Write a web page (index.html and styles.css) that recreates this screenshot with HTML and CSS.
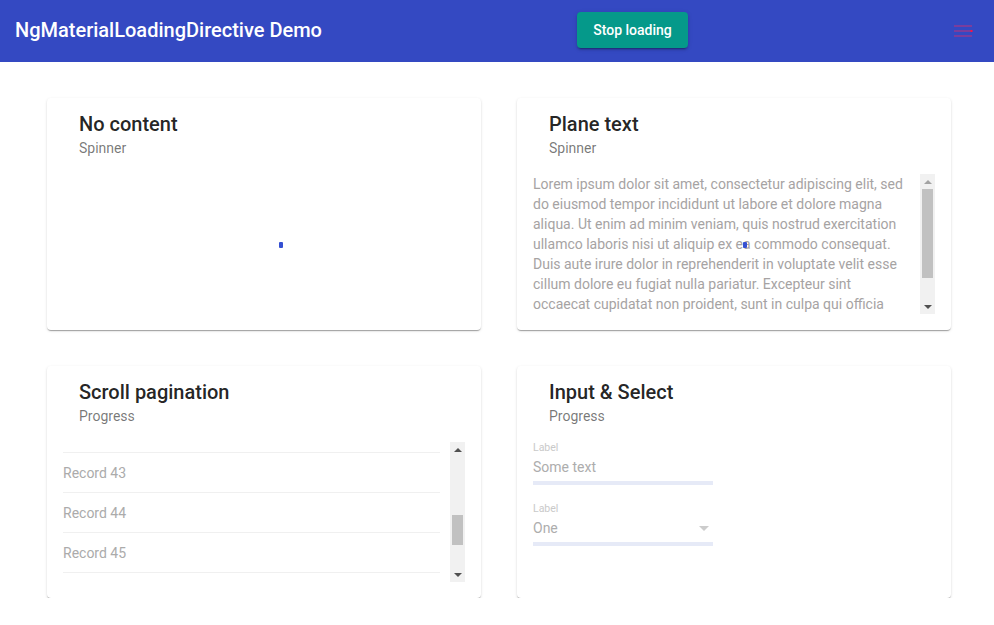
FILE: index.html
```html
<!DOCTYPE html>
<html lang="en">
<head>
<meta charset="utf-8">
<title>NgMaterialLoadingDirective Demo</title>
<link rel="stylesheet" href="styles.css">
</head>
<body>
<header class="toolbar">
  <span class="app-title">NgMaterialLoadingDirective Demo</span>
  <span class="spacer"></span>
  <button class="stop-btn" type="button">Stop loading</button>
  <span class="spacer"></span>
  <span class="menu-btn">
    <svg class="menu-icon" width="24" height="24" viewBox="0 0 24 24">
      <rect x="3" y="6" width="18" height="2" fill="rgba(255,40,90,0.35)"/>
      <rect x="3" y="11" width="18" height="2" fill="rgba(255,40,90,0.35)"/>
      <rect x="3" y="16" width="18" height="2" fill="rgba(255,40,90,0.35)"/>
      <rect x="19.5" y="11" width="2" height="2" fill="#ff1040"/>
    </svg>
  </span>
</header>

<main class="grid">
  <section class="card">
    <div class="card-header">
      <h2 class="card-title">No content</h2>
      <div class="card-subtitle">Spinner</div>
    </div>
    <div class="card-content">
      <span class="spinner spinner-one"></span>
    </div>
  </section>

  <section class="card">
    <div class="card-header">
      <h2 class="card-title">Plane text</h2>
      <div class="card-subtitle">Spinner</div>
    </div>
    <div class="card-content">
      <div class="scroll-box">
        <div class="scroll-view scroll-text">
          <p>Lorem ipsum dolor sit amet, consectetur adipiscing elit, sed do eiusmod tempor incididunt ut labore et dolore magna aliqua. Ut enim ad minim veniam, quis nostrud exercitation ullamco laboris nisi ut aliquip ex ea commodo consequat. Duis aute irure dolor in reprehenderit in voluptate velit esse cillum dolore eu fugiat nulla pariatur. Excepteur sint<br>occaecat cupidatat non proident, sunt in culpa qui officia deserunt mollit anim id est laborum.</p>
        </div>
        <div class="scrollbar">
          <span class="sb-btn"><span class="arrow-up arrow-disabled"></span></span>
          <div class="sb-track">
            <div class="sb-thumb" style="margin-top:0;height:89px"></div>
          </div>
          <span class="sb-btn"><span class="arrow-down"></span></span>
        </div>
      </div>
      <span class="spinner spinner-two"></span>
    </div>
  </section>

  <section class="card">
    <div class="card-header">
      <h2 class="card-title">Scroll pagination</h2>
      <div class="card-subtitle">Progress</div>
    </div>
    <div class="card-content">
      <div class="scroll-box">
        <div class="scroll-view" id="recordList">
          <ul class="record-list">
            <li class="record">Record 36</li>
            <li class="record">Record 37</li>
            <li class="record">Record 38</li>
            <li class="record">Record 39</li>
            <li class="record">Record 40</li>
            <li class="record">Record 41</li>
            <li class="record">Record 42</li>
            <li class="record">Record 43</li>
            <li class="record">Record 44</li>
            <li class="record">Record 45</li>
            <li class="record">Record 46</li>
            <li class="record">Record 47</li>
            <li class="record">Record 48</li>
          </ul>
        </div>
        <div class="scrollbar">
          <span class="sb-btn"><span class="arrow-up"></span></span>
          <div class="sb-track">
            <div class="sb-thumb" style="margin-top:58px;height:30px"></div>
          </div>
          <span class="sb-btn"><span class="arrow-down"></span></span>
        </div>
      </div>
    </div>
  </section>

  <section class="card">
    <div class="card-header">
      <h2 class="card-title">Input &amp; Select</h2>
      <div class="card-subtitle">Progress</div>
    </div>
    <div class="card-content">
      <div class="field">
        <div class="field-label">Label</div>
        <div class="field-value">Some text</div>
        <div class="field-bar"></div>
      </div>
      <div class="field field-select">
        <div class="field-label">Label</div>
        <div class="field-value select-value"><span>One</span><span class="select-arrow"></span></div>
        <div class="field-bar"></div>
      </div>
    </div>
  </section>
</main>
<script src="script.js"></script>
</body>
</html>
```

FILE: styles.css
```css
* { box-sizing: border-box; }

html, body {
  margin: 0;
  padding: 0;
  background: #ffffff;
  font-family: Roboto, "Liberation Sans", Arial, sans-serif;
}

.toolbar {
  height: 62px;
  background: #3449c2;
  display: flex;
  align-items: center;
  padding: 0 11px 3px 15px;
  color: #ffffff;
}

.app-title {
  font-size: 20px;
  font-weight: 500;
  line-height: 24px;
  white-space: nowrap;
}

.spacer { flex: 1 1 auto; }

.stop-btn {
  height: 36px;
  padding: 0 16px;
  border: none;
  border-radius: 4px;
  background: #05998a;
  color: #ffffff;
  font-family: Roboto, "Liberation Sans", Arial, sans-serif;
  font-size: 14px;
  font-weight: 500;
  line-height: 36px;
  box-shadow: 0 3px 1px -2px rgba(0,0,0,.2), 0 2px 2px 0 rgba(0,0,0,.14), 0 1px 5px 0 rgba(0,0,0,.12);
}

.menu-btn {
  width: 40px;
  height: 40px;
  display: flex;
  align-items: center;
  justify-content: center;
  margin-top: 2px;
}

.menu-icon { display: block; }

.grid {
  display: grid;
  grid-template-columns: 434px 434px;
  column-gap: 36px;
  row-gap: 36px;
  padding: 36px 0 0 47px;
}

.card {
  background: #ffffff;
  border-radius: 4px;
  padding: 14px 16px 16px;
  box-shadow: 0 2px 1px -1px rgba(0,0,0,.2), 0 1px 1px 0 rgba(0,0,0,.14), 0 1px 3px 0 rgba(0,0,0,.12);
}

.card-header {
  padding: 0 16px 16px;
}

.card-title {
  margin: 0 0 2px;
  font-size: 20px;
  font-weight: 500;
  line-height: 24px;
  color: rgba(0,0,0,.87);
}

.card-subtitle {
  font-size: 14px;
  line-height: 20px;
  color: rgba(0,0,0,.54);
}

.card-content {
  position: relative;
  height: 140px;
}

.spinner {
  position: absolute;
  width: 4px;
  height: 6px;
  background: #3550d2;
  border-radius: 1px;
}

.spinner-one { left: 216px; top: 68px; }
.spinner-two { left: 210px; top: 68px; }

/* scroll area with drawn classic scrollbar */
.scroll-box {
  display: flex;
  height: 140px;
}

.scroll-view {
  flex: 1 1 auto;
  min-width: 0;
  height: 140px;
  overflow: hidden;
}

.scrollbar {
  flex: 0 0 15px;
  display: flex;
  flex-direction: column;
  background: #f1f1f1;
}

.sb-btn {
  flex: 0 0 15px;
  display: flex;
  align-items: center;
  justify-content: center;
}

.sb-track {
  flex: 1 1 auto;
  display: flex;
  flex-direction: column;
  padding: 0 2px;
}

.sb-thumb {
  flex: 0 0 auto;
  background: #c1c1c1;
}

.arrow-up {
  width: 0;
  height: 0;
  border-left: 4px solid transparent;
  border-right: 4px solid transparent;
  border-bottom: 4px solid #505050;
}

.arrow-down {
  width: 0;
  height: 0;
  border-left: 4px solid transparent;
  border-right: 4px solid transparent;
  border-top: 4px solid #505050;
}

.arrow-up.arrow-disabled { border-bottom-color: #a3a3a3; }

.scroll-text p {
  margin: 0 0 14px;
  font-size: 14px;
  line-height: 20px;
  color: #a6a3a3;
}

.record-list {
  list-style: none;
  margin: 0 10px 0 0;
  padding: 0;
}

.record {
  height: 40px;
  padding-top: 10px;
  border-top: 1px solid #f0f0f0;
  font-size: 14px;
  line-height: 20px;
  color: #ababab;
}

.field {
  width: 180px;
}

.field-select { margin-top: 18px; }

.field-label {
  font-size: 10.5px;
  line-height: 12px;
  color: #c9c9c9;
}

.field-value {
  margin-top: 3px;
  font-size: 14px;
  line-height: 20px;
  color: #adadad;
}

.select-value {
  display: flex;
  align-items: center;
  justify-content: space-between;
  padding-right: 4px;
}

.select-arrow {
  width: 0;
  height: 0;
  border-left: 5px solid transparent;
  border-right: 5px solid transparent;
  border-top: 5px solid #cccccc;
  margin-top: 1px;
}

.field-bar {
  margin-top: 4px;
  height: 4px;
  background: #e6eaf7;
}
```

FILE: script.js
```js
document.getElementById('recordList').scrollTop = 270;
```
